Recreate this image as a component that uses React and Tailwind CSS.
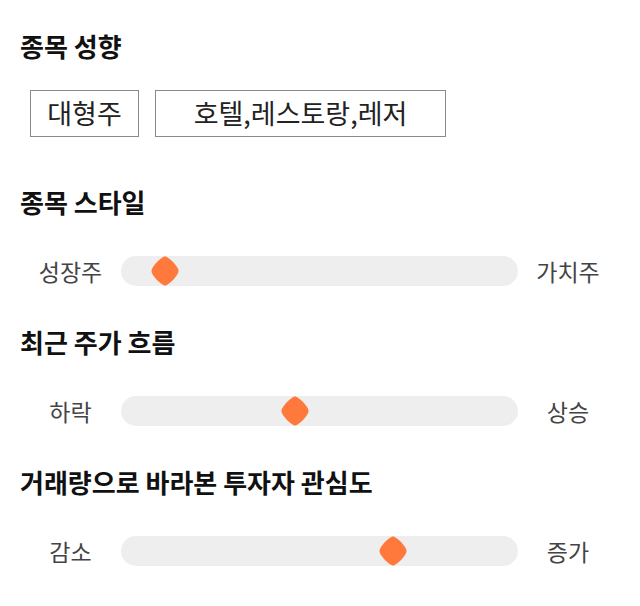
import React from "react";

const FONT = { fontFamily: '"Noto Sans CJK KR", "Noto Sans", sans-serif' };

function Title({ children, className = "" }) {
  return (
    <h2 className={"text-[26px] leading-[28px] font-bold text-[#111] " + className}>{children}</h2>
  );
}

function Tag({ children, width }) {
  return (
    <div
      className={
        "h-[47px] border border-[#8a8a8a] flex items-center justify-center text-[27px] text-[#222] " + width
      }
    >
      {children}
    </div>
  );
}

function Thumb() {
  return (
    <svg width="28" height="30" viewBox="0 0 28 30">
      <path
        d="M14 0.5 C17.5 0.5 27.5 10.5 27.5 15 C27.5 19.5 17.5 29.5 14 29.5 C10.5 29.5 0.5 19.5 0.5 15 C0.5 10.5 10.5 0.5 14 0.5 Z"
        fill="#ff783c"
      />
    </svg>
  );
}

function Scale({ left, right, value, className = "" }) {
  return (
    <div className={"flex items-center h-[30px] " + className}>
      <div className="w-[101px] text-center text-[23px] leading-[30px] text-[#444]">{left}</div>
      <div className="relative w-[397px] h-[30px] rounded-full bg-[#eeeeee]">
        <div
          className="absolute top-0 -translate-x-1/2 h-[30px] flex items-center"
          style={{ left: value + "%" }}
        >
          <Thumb />
        </div>
      </div>
      <div className="w-[100px] text-center text-[23px] leading-[30px] text-[#444]">{right}</div>
    </div>
  );
}

export default function App() {
  return (
    <div className="w-[640px] h-[606px] bg-white px-5 pt-8" style={FONT}>
      <Title>종목 성향</Title>
      <div className="mt-[30px] ml-[10px] flex gap-4">
        <Tag width="w-[109px]">대형주</Tag>
        <Tag width="w-[291px]">호텔,레스토랑,레저</Tag>
      </div>

      <Title className="mt-[51px]">종목 스타일</Title>
      <Scale className="mt-[40px]" left="성장주" right="가치주" value={11.1} />

      <Title className="mt-[42px]">최근 주가 흐름</Title>
      <Scale className="mt-[40px]" left="하락" right="상승" value={43.8} />

      <Title className="mt-[42px]">거래량으로 바라본 투자자 관심도</Title>
      <Scale className="mt-[40px]" left="감소" right="증가" value={68.5} />
    </div>
  );
}
